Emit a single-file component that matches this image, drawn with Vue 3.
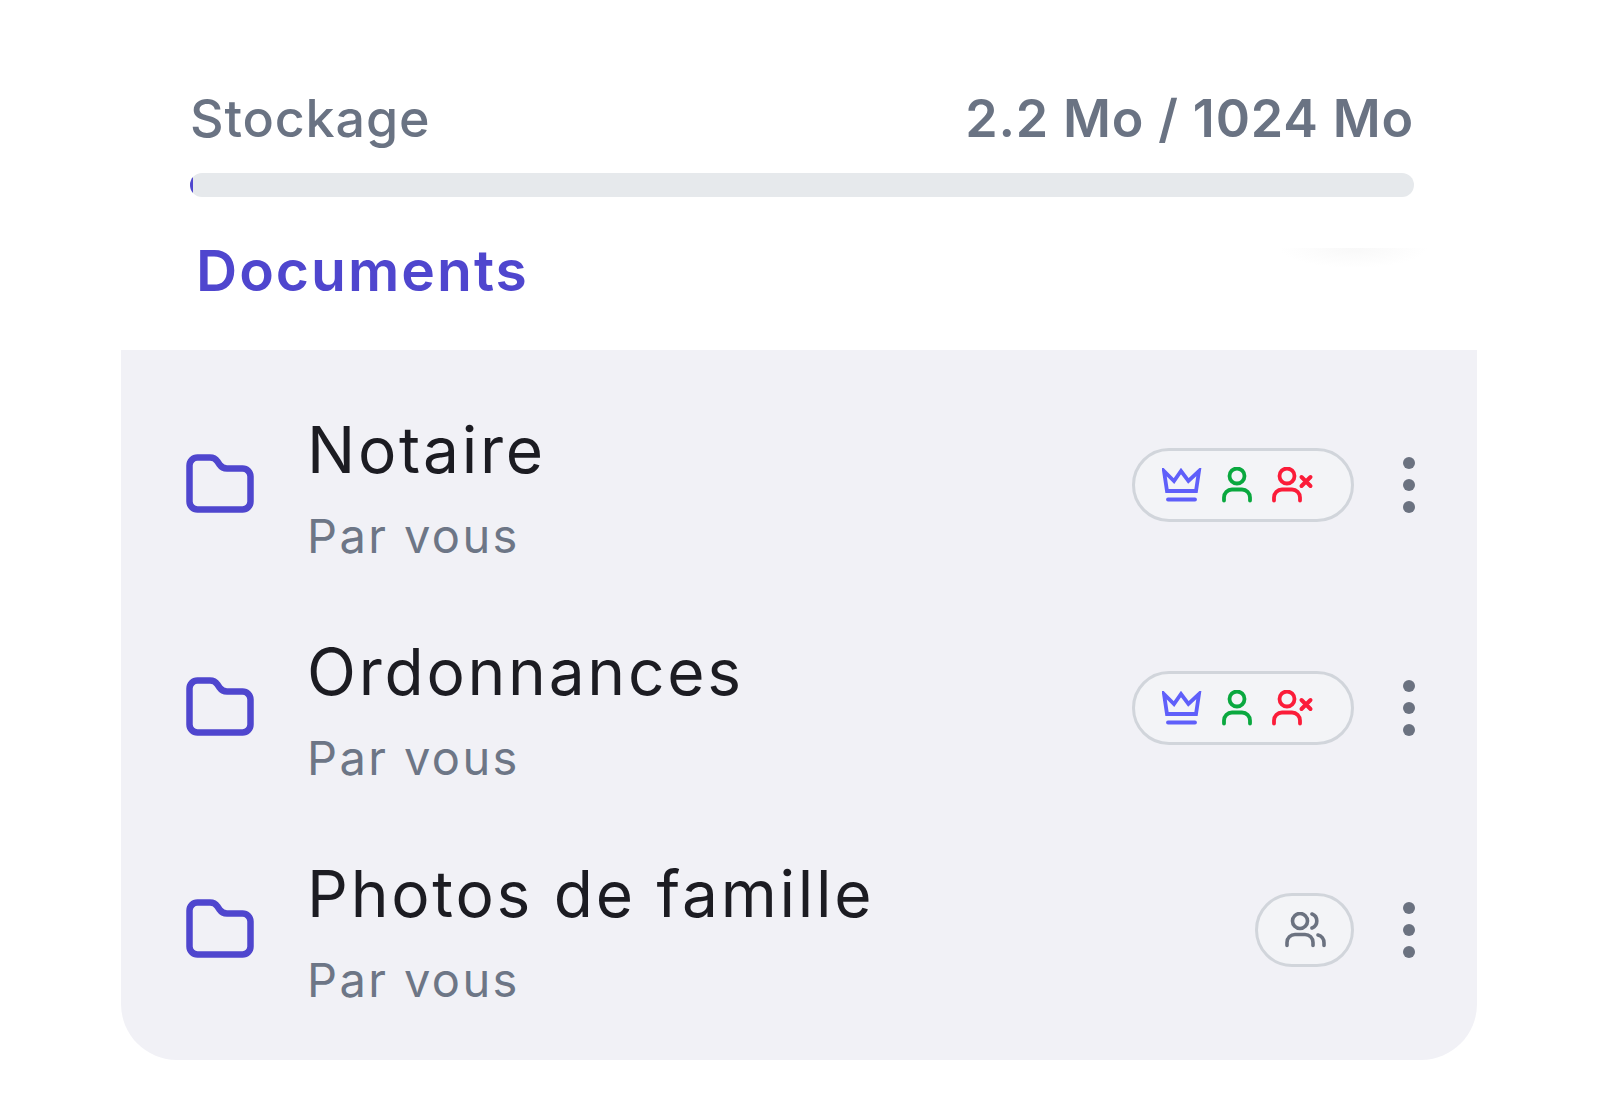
<script setup>
const folders = [
  { name: 'Notaire', shared: false },
  { name: 'Ordonnances', shared: false },
  { name: 'Photos de famille', shared: true },
]
</script>

<template>
  <div class="page">
    <div class="storage">
      <div class="storage-head">
        <span class="storage-label">Stockage</span>
        <span class="storage-value">2.2 Mo / 1024 Mo</span>
      </div>
      <div class="bar"><div class="bar-fill" :style="{ width: '0.25%' }"></div></div>
    </div>

    <div class="heading-row">
      <h2 class="heading">Documents</h2>
      <div class="fade"></div>
    </div>

    <ul class="panel">
      <li v-for="folder in folders" :key="folder.name" class="row">
        <svg class="folder" viewBox="0 0 68 60" fill="none" stroke="#4f46ce" stroke-width="6.500" stroke-linejoin="round">
          <path d="M3.500 11.500a8 8 0 0 1 8-8h12.500a9 9 0 0 1 7.400 3.900l2.200 3.200a9 9 0 0 0 7.400 3.900h15.500a8 8 0 0 1 8 8v25a8 8 0 0 1-8 8H11.500a8 8 0 0 1-8-8z" />
        </svg>
        <div class="info">
          <div class="name">{{ folder.name }}</div>
          <div class="owner">Par vous</div>
        </div>
        <div v-if="!folder.shared" class="pill">
          <svg class="crown" viewBox="0 0 40 34" fill="none" stroke="#5f5ffa" stroke-width="3.800" stroke-linejoin="miter" stroke-linecap="round">
            <path d="M2 3l10 10L19 3l7.400 10L37 3l-3 20H5z" />
            <path d="M6 31.500h27" />
          </svg>
          <svg class="user" viewBox="0 0 30 36" fill="none" stroke="#0aa83f" stroke-width="3.800" stroke-linecap="round">
            <circle cx="15" cy="9" r="7.500" />
            <path d="M2 33.500v-3a8 8 0 0 1 8-8h10a8 8 0 0 1 8 8v3" />
          </svg>
          <svg class="user-x" viewBox="0 0 42 36" fill="none" stroke="#fb1c39" stroke-width="3.800" stroke-linecap="round">
            <circle cx="15" cy="9" r="7.500" />
            <path d="M2 33.500v-3a8 8 0 0 1 8-8h10a8 8 0 0 1 8 8v3" />
            <path d="M29.500 10l9 9M38.500 10l-9 9" stroke-width="4" />
          </svg>
        </div>
        <div v-else class="pill pill-small">
          <svg class="users" viewBox="0 0 42 36" fill="none" stroke="#6b7280" stroke-width="3.600" stroke-linecap="round">
            <circle cx="15" cy="9" r="7.500" />
            <path d="M2 33.500v-3a8 8 0 0 1 8-8h10a8 8 0 0 1 8 8v3" />
            <path d="M27 2a7.500 7.500 0 0 1 0 14" />
            <path d="M33 23a8 8 0 0 1 6 8v2.500" />
          </svg>
        </div>
        <button class="more" type="button">
          <span></span><span></span><span></span>
        </button>
      </li>
    </ul>
  </div>
</template>

<style>
html, body {
  background: #fff;
}
</style>

<style scoped>
.page {
  width: 1600px;
  height: 1100px;
  box-sizing: border-box;
  padding: 88px 123px 0 121px;
  font-family: Inter, "Liberation Sans", sans-serif;
}

.storage {
  padding: 0 63px 0 69px;
}

.storage-head {
  display: flex;
  justify-content: space-between;
  align-items: baseline;
  height: 61px;
  line-height: 61px;
  font-size: 52px;
  font-weight: 500;
  letter-spacing: 0.850px;
  color: #6a7383;
}

.storage-value {
  font-weight: 600;
}

.bar {
  height: 24px;
  margin-top: 24px;
  border-radius: 12px;
  background: #e6e9ec;
  overflow: hidden;
}

.bar-fill {
  height: 100%;
  background: #4f46ce;
  border-radius: 12px;
}

.heading-row {
  display: flex;
  justify-content: space-between;
  align-items: flex-start;
  height: 153px;
  padding: 0 48px 0 75px;
}

.heading {
  margin: 38px 0 0;
  font-size: 57px;
  line-height: 72px;
  font-weight: 600;
  letter-spacing: 2px;
  color: #4f46ce;
}

.fade {
  width: 150px;
  height: 20px;
  margin-top: 51px;
  background: radial-gradient(ellipse at 50% 0, #f8f8f8, #fff 70%);
}

.panel {
  list-style: none;
  margin: 0;
  padding: 24px 0 19px;
  background: #f1f1f6;
  border-radius: 0 0 56px 56px;
}

.row {
  display: flex;
  align-items: center;
  height: 222.400px;
  padding: 0 62px 0 65px;
}

.folder {
  width: 68px;
  height: 60px;
  flex: none;
  margin-top: -2px;
}

.info {
  flex: 1;
  margin-left: 53px;
  padding-top: 3px;
}

.name {
  font-size: 64px;
  line-height: 80px;
  letter-spacing: 2.750px;
  color: #1c1c22;
}

.owner {
  margin-top: 18px;
  font-size: 47px;
  line-height: 56px;
  letter-spacing: 2.400px;
  color: #6d7686;
}

.pill {
  display: flex;
  align-items: center;
  box-sizing: border-box;
  height: 74px;
  padding: 0 37px 0 27px;
  border: 3px solid #d1d5db;
  border-radius: 37px;
  background: #f3f4f7;
}

.pill-small {
  padding: 0 24px 0 27px;
}

.crown {
  width: 40px;
  height: 34px;
}

.user {
  width: 30px;
  height: 36px;
  margin-left: 20px;
}

.user-x {
  width: 42px;
  height: 36px;
  margin-left: 20px;
}

.users {
  width: 42px;
  height: 36px;
}

.more {
  display: flex;
  flex-direction: column;
  gap: 10px;
  margin-left: 49px;
  padding: 0;
  border: 0;
  background: none;
}

.more span {
  width: 12px;
  height: 12px;
  border-radius: 50%;
  background: #6b7280;
}
</style>
